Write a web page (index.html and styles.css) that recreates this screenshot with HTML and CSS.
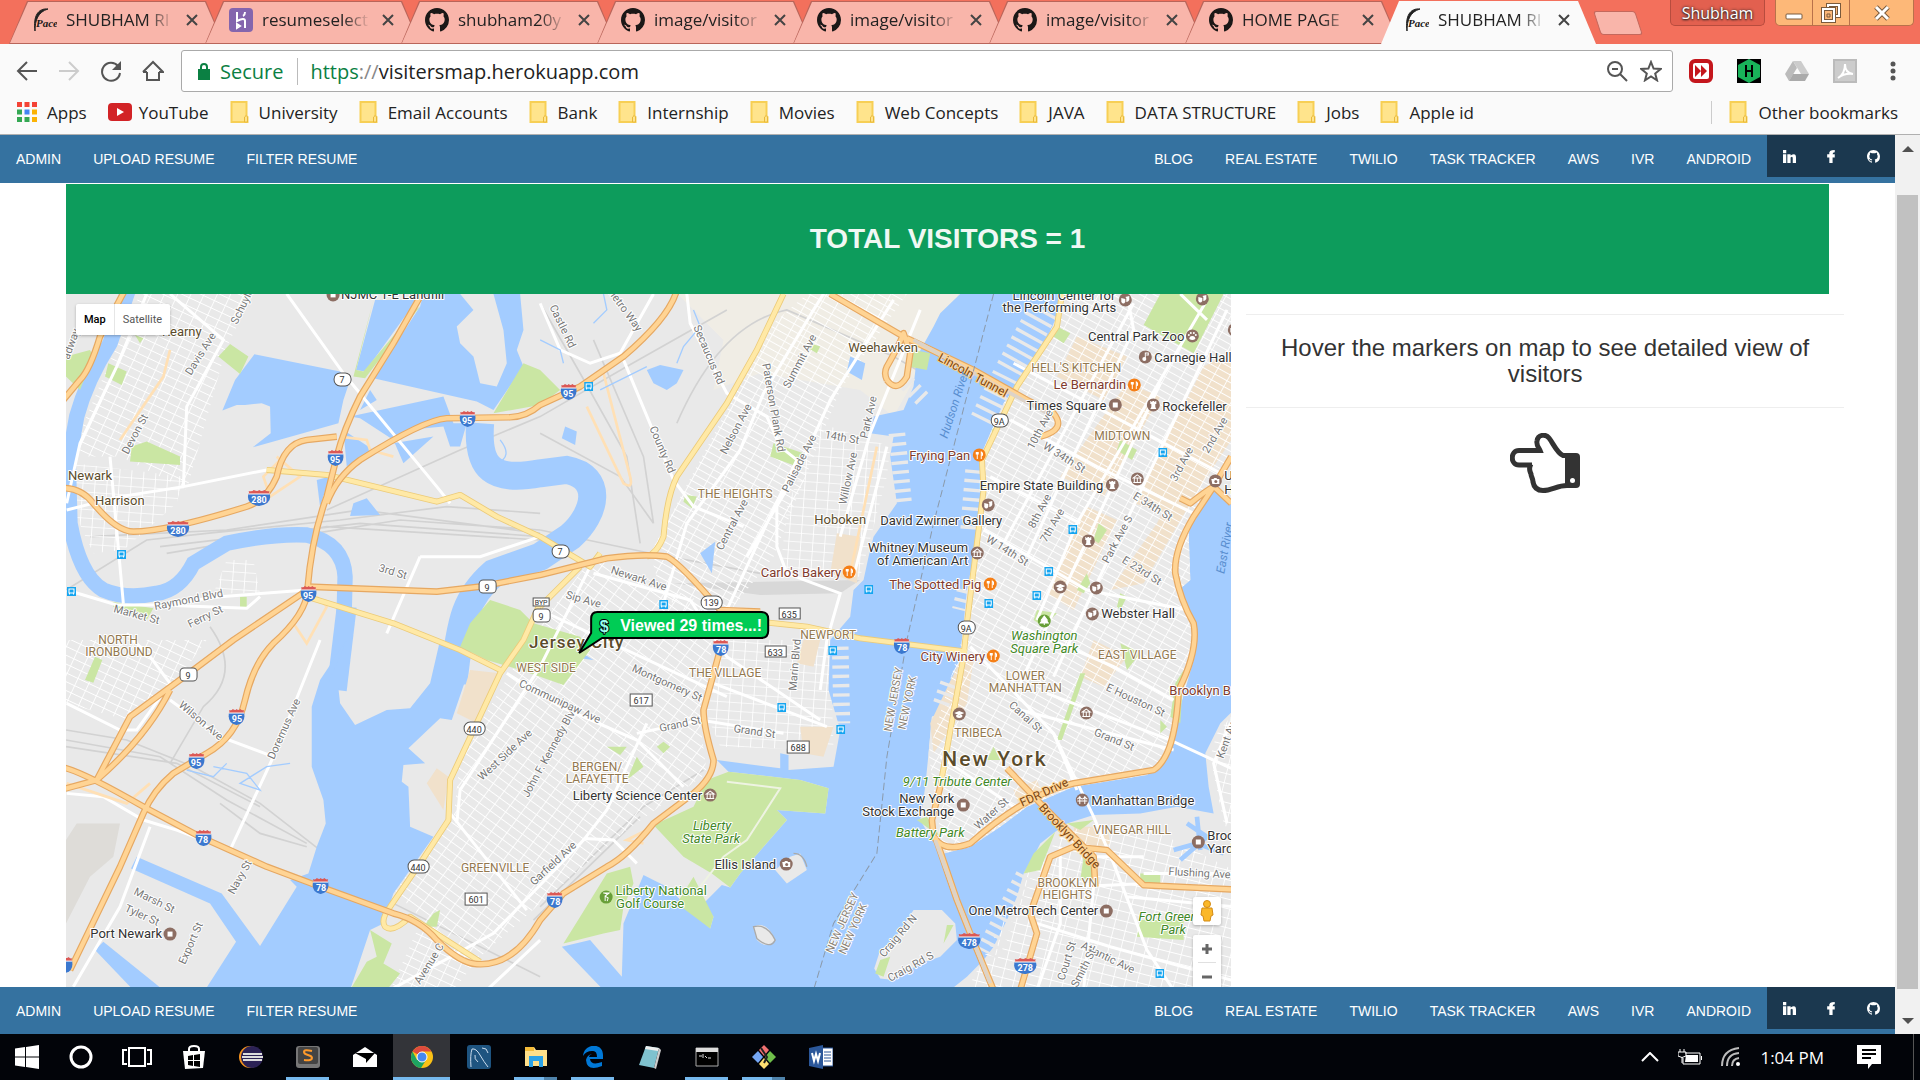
FILE: index.html
```html
<!DOCTYPE html>
<html lang="en">
<head>
<meta charset="utf-8">
<title>SHUBHAM RESUME</title>
<link rel="stylesheet" href="styles.css">
</head>
<body>
<svg class="defs" aria-hidden="true">
  <defs>
    <symbol id="github" viewBox="0 0 16 16"><path d="M8 0C3.58 0 0 3.58 0 8c0 3.54 2.29 6.53 5.47 7.59.4.07.55-.17.55-.38 0-.19-.01-.82-.01-1.49-2.01.37-2.53-.49-2.69-.94-.09-.23-.48-.94-.82-1.13-.28-.15-.68-.52-.01-.53.63-.01 1.08.58 1.23.82.72 1.21 1.87.87 2.33.66.07-.52.28-.87.51-1.07-1.78-.2-3.64-.89-3.64-3.95 0-.87.31-1.59.82-2.15-.08-.2-.36-1.02.08-2.12 0 0 .67-.21 2.2.82.64-.18 1.32-.27 2-.27s1.36.09 2 .27c1.53-1.04 2.2-.82 2.2-.82.44 1.1.16 1.92.08 2.12.51.56.82 1.27.82 2.15 0 3.07-1.87 3.75-3.65 3.95.29.25.54.73.54 1.48 0 1.07-.01 1.93-.01 2.2 0 .21.15.46.55.38A8.01 8.01 0 0 0 16 8c0-4.42-3.58-8-8-8z"/></symbol>
    <symbol id="pace" viewBox="0 0 24 24"><path d="M15 1C5 0 0 8 2 23 2 12 5 4 15 1z" fill="#222" stroke="#222"/><text x="3" y="19" class="pace-text">Pace</text></symbol>
    <symbol id="heroku" viewBox="0 0 24 24"><rect width="24" height="24" rx="4" fill="#8465ad"/><path d="M8 4v9q8-4 8 0v7M8 16v4l3-2zM16 4q0 3-2 4" fill="none" stroke="#fff" stroke-width="2"/></symbol>
    <symbol id="close" viewBox="0 0 12 12"><path d="M1 1l10 10M11 1L1 11" stroke="#444" stroke-width="2"/></symbol>
    <symbol id="folder" viewBox="0 0 18 22"><path d="M1 1h15v14l1 1v5H1z" fill="#ffe48c" stroke="#f7cf55" stroke-width="2"/><path d="M14 21v-5q2-3 3 0v5z" fill="#ffe48c" stroke="#e9b93b"/></symbol>
    <symbol id="linkedin" viewBox="0 0 12 12"><path d="M0 4h3v8H0zM0 0h3v3H0zM4 4h3v1q5-3 5 2v5H9V8q0-3-2-1v5H4z"/></symbol>
    <symbol id="facebook" viewBox="0 0 12 12"><path d="M4 12V7H2V4h2q-1-4 5-4v2Q7 2 7 4h2v3H7v5z"/></symbol>
    <symbol id="shield" viewBox="0 0 18 16" preserveAspectRatio="none"><path d="M1 4h16q2 10-8 12Q-1 14 1 4z" fill="#3b78cf"/><path d="M1 4q1-2 0-3 3 1 4-1 3 2 4 0 2 2 4 0 2 2 4 1-1 1 0 3z" fill="#db5855"/><path d="M1 4h16" stroke="#fff"/></symbol>
    <symbol id="food" viewBox="0 0 14 14"><circle cx="7" cy="7" r="6.500" fill="#f57f17"/><path d="M5 4v7M4 4v2h2V4M9 11V4q2 1 1 4" stroke="#fff" fill="none"/></symbol>
    <symbol id="place" viewBox="0 0 14 14"><circle cx="7" cy="7" r="6.500" fill="#8d6e63"/><path d="M4.500 4.500h5v5h-5z" fill="#fff"/></symbol>
    <symbol id="museum" viewBox="0 0 14 14"><circle cx="7" cy="7" r="6.500" fill="#8d6e63"/><path d="M3 6l4-3 4 3zM4 6v4M7 6v4M10 6v4M3 10.500h8" fill="none" stroke="#fff"/></symbol>
    <symbol id="tower" viewBox="0 0 14 14"><circle cx="7" cy="7" r="6.500" fill="#8d6e63"/><path d="M4 3h1v1h1V3h2v1h1V3h1v3H9v3l1 2H4l1-2V6H4z" fill="#fff"/></symbol>
    <symbol id="mask" viewBox="0 0 14 14"><circle cx="7" cy="7" r="6.500" fill="#8d6e63"/><path d="M3 5l4 1v3q-2 3-4 0zM7 4l4-1v4q-1 2-3 2V5z" fill="#fff"/></symbol>
    <symbol id="note" viewBox="0 0 14 14"><circle cx="7" cy="7" r="6.500" fill="#8d6e63"/><path d="M7 9V3h3v2H8" fill="none" stroke="#fff"/><circle cx="6" cy="9" r="2" fill="#fff"/></symbol>
    <symbol id="paw" viewBox="0 0 14 14"><circle cx="7" cy="7" r="6.500" fill="#8d6e63"/><path d="M4 10q0-3 3-3t3 3q-3 2-6 0z" fill="#fff"/><g fill="#fff"><circle cx="3.500" cy="6" r="1"/><circle cx="5.500" cy="4" r="1"/><circle cx="8.500" cy="4" r="1"/><circle cx="10.500" cy="6" r="1"/></g></symbol>
    <symbol id="bridge" viewBox="0 0 14 14"><circle cx="7" cy="7" r="6.500" fill="#8d6e63"/><path d="M4.500 3v8M9.500 3v8M2 8h10M2 6l2.500-2Q7 8 9.500 4L12 6" fill="none" stroke="#fff"/></symbol>
    <symbol id="school" viewBox="0 0 14 14"><circle cx="7" cy="7" r="6.500" fill="#8d6e63"/><path d="M2 6l5-2 5 2-5 2.500zM4 8v2q3 2 6 0V8" fill="#fff"/></symbol>
    <symbol id="camera" viewBox="0 0 14 14"><circle cx="7" cy="7" r="6.500" fill="#8d6e63"/><path d="M3 5h2l1-1h2l1 1h2v5H4z" fill="#fff"/><circle cx="7.500" cy="7.500" r="1.500" fill="#8d6e63"/></symbol>
    <symbol id="tree" viewBox="0 0 14 14"><circle cx="7" cy="7" r="6.500" fill="#689f38"/><path d="M7 2l3 4H9l2 3H3l2-3H4zM7 8v3" fill="#fff" stroke="#fff"/></symbol>
    <symbol id="golf" viewBox="0 0 14 14"><circle cx="7" cy="7" r="6.500" fill="#689f38"/><path d="M4 3h6L6 6l3 2-1 3M6 6v5M5 3l3 1" fill="none" stroke="#fff"/></symbol>
    <symbol id="transit" viewBox="0 0 9 9"><path d="M0 0h9v9H0z" fill="#15a5f0"/><path d="M2 2h5v4H2zM2.500 6v1.500M6.500 6v1.500" fill="none" stroke="#fff"/></symbol>
  </defs>
</svg>

<header class="browser">
  <div class="tabstrip">
    <nav class="tabs" aria-label="Tabs">
      <div class="tab"><svg class="favicon"><use href="#pace"/></svg><span class="tab-title">SHUBHAM RI</span><button class="tab-close" aria-label="Close tab"><svg><use href="#close"/></svg></button></div>
      <div class="tab"><svg class="favicon"><use href="#heroku"/></svg><span class="tab-title">resumeselect</span><button class="tab-close" aria-label="Close tab"><svg><use href="#close"/></svg></button></div>
      <div class="tab"><svg class="favicon"><use href="#github"/></svg><span class="tab-title">shubham20y</span><button class="tab-close" aria-label="Close tab"><svg><use href="#close"/></svg></button></div>
      <div class="tab"><svg class="favicon"><use href="#github"/></svg><span class="tab-title">image/visitor</span><button class="tab-close" aria-label="Close tab"><svg><use href="#close"/></svg></button></div>
      <div class="tab"><svg class="favicon"><use href="#github"/></svg><span class="tab-title">image/visitor</span><button class="tab-close" aria-label="Close tab"><svg><use href="#close"/></svg></button></div>
      <div class="tab"><svg class="favicon"><use href="#github"/></svg><span class="tab-title">image/visitor</span><button class="tab-close" aria-label="Close tab"><svg><use href="#close"/></svg></button></div>
      <div class="tab"><svg class="favicon"><use href="#github"/></svg><span class="tab-title">HOME PAGE</span><button class="tab-close" aria-label="Close tab"><svg><use href="#close"/></svg></button></div>
      <div class="tab active"><svg class="favicon"><use href="#pace"/></svg><span class="tab-title">SHUBHAM RI</span><button class="tab-close" aria-label="Close tab"><svg><use href="#close"/></svg></button></div>
      <button class="new-tab" aria-label="New tab"></button>
    </nav>
    <div class="window-buttons">
      <button class="profile">Shubham</button>
      <div class="window-controls">
        <button aria-label="Minimize"><svg width="18" height="18" viewBox="0 0 18 18"><rect x="1" y="10" width="16" height="5" rx="1" fill="#fff" stroke="#7a5a3c"/></svg></button>
        <button aria-label="Restore"><svg width="20" height="20" viewBox="0 0 20 20" fill="none"><path d="M7 5V2h11v11h-4" stroke="#7a5a3c" stroke-width="4"/><path d="M7 5V2h11v11h-4" stroke="#fff" stroke-width="2"/><rect x="2" y="6" width="11" height="12" stroke="#7a5a3c" stroke-width="4"/><rect x="2" y="6" width="11" height="12" stroke="#fff" stroke-width="2"/><path d="M6 11h3v3H6z" stroke="#7a5a3c"/></svg></button>
        <button class="wide" aria-label="Close"><svg width="18" height="16" viewBox="0 0 18 16"><path d="M3 2l12 12M15 2L3 14" stroke="#7a5a3c" stroke-width="5"/><path d="M3 2l12 12M15 2L3 14" stroke="#fff" stroke-width="3"/></svg></button>
      </div>
    </div>
  </div>
  <div class="toolbar">
    <button class="tool" aria-label="Back"><svg width="22" height="20" viewBox="0 0 22 20"><path d="M21 10H3M11 1l-9 9 9 9" fill="none" stroke="#555" stroke-width="2"/></svg></button>
    <button class="tool" aria-label="Forward"><svg width="22" height="20" viewBox="0 0 22 20"><path d="M1 10h18M11 1l9 9-9 9" fill="none" stroke="#ccc" stroke-width="2"/></svg></button>
    <button class="tool" aria-label="Reload"><svg width="22" height="22" viewBox="0 0 22 22"><path d="M18 6a9 9 0 1 0 2 7" fill="none" stroke="#555" stroke-width="2"/><path d="M21 1v9h-9z" fill="#555"/></svg></button>
    <button class="tool" aria-label="Home"><svg width="22" height="22" viewBox="0 0 22 22"><path d="M5 12v8h12v-8M1 12L11 2l10 10h-4M5 12H1" fill="none" stroke="#555" stroke-width="2"/></svg></button>
    <div class="omnibox">
      <svg width="12" height="17" viewBox="0 0 12 17"><path d="M0 6h12v11H0z" fill="#0b8043"/><path d="M3 7V4q0-3 3-3t3 3v3" fill="none" stroke="#0b8043" stroke-width="2"/></svg>
      <span class="secure">Secure</span>
      <span class="url" role="textbox" aria-label="Address"><b>https</b><i>://</i>visitersmap.herokuapp.com</span>
      <svg width="22" height="22" viewBox="0 0 22 22" fill="none" stroke="#555" stroke-width="2"><circle cx="9" cy="9" r="7"/><path d="M14 14l7 7M6 9h6"/></svg>
      <svg width="22" height="22" viewBox="0 0 22 22"><path d="M11 2l2.600 6.500 7 .5-5.400 4.500 1.800 6.800-6-3.800-6 3.800 1.800-6.800L1.400 9l7-.5z" fill="none" stroke="#555" stroke-width="2"/></svg>
    </div>
    <div class="extensions">
      <svg width="24" height="24" viewBox="0 0 24 24"><rect x="2" y="2" width="20" height="20" rx="4" fill="#fff" stroke="#c4161c" stroke-width="4"/><path d="M6 6l6 6-6 6zM12 6l6 6-6 6z" fill="#c4161c"/></svg>
      <svg width="24" height="24" viewBox="0 0 24 24"><path d="M0 0h24v24H0z" fill="#000"/><path d="M12 0l11 6v12l-11 6-11-6V6z" fill="#19b35a"/><path d="M9 6v12M15 6v12M9 12h6" stroke="#000" stroke-width="2"/></svg>
      <svg width="24" height="22" viewBox="0 0 24 22"><path d="M8 1h8l8 13h-8z" fill="#ccc"/><path d="M8 1l4 7-8 13-4-7z" fill="#bbb"/><path d="M8 14h16l-4 7H4z" fill="#aaa"/></svg>
      <svg width="24" height="24" viewBox="0 0 24 24"><path d="M1 1h22v22H1z" fill="#ccc" stroke="#bbb" stroke-width="2"/><path d="M5 19q7-4 7-14 0 9 8 10-9-1-15 4" fill="none" stroke="#fff" stroke-width="2"/></svg>
      <svg width="24" height="20" viewBox="0 0 24 20" fill="#555"><circle cx="12" cy="3" r="2.500"/><circle cx="12" cy="10" r="2.500"/><circle cx="12" cy="17" r="2.500"/></svg>
    </div>
  </div>
  <nav class="bookmarks" aria-label="Bookmarks">
    <a href="#"><svg class="apps" viewBox="0 0 20 20"><path d="M0 0h5v5H0zM7.500 0h5v5h-5zM15 0h5v5h-5z" fill="#f44336"/><path d="M0 7.500h5v5H0zM0 15h5v5H0zM7.500 15h5v5h-5z" fill="#34a853"/><path d="M7.500 7.500h5v5h-5z" fill="#4285f4"/><path d="M15 7.500h5v5h-5zM15 15h5v5h-5z" fill="#fbb305"/></svg>Apps</a>
    <a href="#" class="tight"><svg class="youtube" viewBox="0 0 24 18"><rect width="24" height="18" rx="4" fill="#d22326"/><path d="M9 5l7 4-7 4z" fill="#fff"/></svg>YouTube</a>
    <a href="#"><svg class="folder"><use href="#folder"/></svg>University</a>
    <a href="#"><svg class="folder"><use href="#folder"/></svg>Email Accounts</a>
    <a href="#"><svg class="folder"><use href="#folder"/></svg>Bank</a>
    <a href="#"><svg class="folder"><use href="#folder"/></svg>Internship</a>
    <a href="#"><svg class="folder"><use href="#folder"/></svg>Movies</a>
    <a href="#"><svg class="folder"><use href="#folder"/></svg>Web Concepts</a>
    <a href="#"><svg class="folder"><use href="#folder"/></svg>JAVA</a>
    <a href="#"><svg class="folder"><use href="#folder"/></svg>DATA STRUCTURE</a>
    <a href="#"><svg class="folder"><use href="#folder"/></svg>Jobs</a>
    <a href="#"><svg class="folder"><use href="#folder"/></svg>Apple id</a>
    <a href="#" class="other"><svg class="folder"><use href="#folder"/></svg>Other bookmarks</a>
  </nav>
</header>

<div class="viewport">
  <div class="page">
    <nav class="site-nav">
      <a href="#">ADMIN</a><a href="#">UPLOAD RESUME</a><a href="#">FILTER RESUME</a>
      <span class="spacer"></span>
      <a href="#">BLOG</a><a href="#">REAL ESTATE</a><a href="#">TWILIO</a><a href="#">TASK TRACKER</a><a href="#">AWS</a><a href="#">IVR</a><a href="#">ANDROID</a>
      <div class="social"><a href="#" aria-label="LinkedIn"><svg><use href="#linkedin"/></svg></a><a href="#" aria-label="Facebook"><svg><use href="#facebook"/></svg></a><a href="#" aria-label="GitHub"><svg><use href="#github"/></svg></a></div>
    </nav>
    <h1 class="banner">TOTAL VISITORS = 1</h1>
    <main class="content">
      <section class="map" aria-label="Map">
        <svg class="map-canvas" viewBox="66 294 1165 693" preserveAspectRatio="xMidYMid slice">
          <defs>
            <pattern id="g25" width="36" height="24" patternUnits="userSpaceOnUse" patternTransform="rotate(25)"><path d="M0 0H36M0 0V24" stroke="#fff" stroke-width="5"/></pattern>
            <pattern id="g5" width="36" height="26" patternUnits="userSpaceOnUse" patternTransform="rotate(4)"><path d="M0 0H36M0 0V26" stroke="#fff" stroke-width="5"/></pattern>
            <pattern id="g30" width="42" height="20" patternUnits="userSpaceOnUse" patternTransform="rotate(29)"><path d="M0 0H42M0 0V20" stroke="#fff" stroke-width="5"/></pattern>
            <pattern id="g40" width="40" height="24" patternUnits="userSpaceOnUse" patternTransform="rotate(36)"><path d="M0 0H40M0 0V24" stroke="#fff" stroke-width="5"/></pattern>
            <pattern id="g15" width="36" height="28" patternUnits="userSpaceOnUse" patternTransform="rotate(14)"><path d="M0 0H36M0 0V28" stroke="#fff" stroke-width="5"/></pattern>
            <g id="highways">
              <path d="M1085 12L1000 160 900 320Q850 420 830 500L800 620Q755 740 742 900 740 970 640 1060 580 1120 555 1230 530 1340 440 1390L340 1450Q280 1500 250 1570L180 1730 30 2040"/>
              <path d="M1850 0Q1830 80 1690 200L1560 290 1440 345Q1400 380 1350 382L1160 385Q1090 390 900 510 830 560 800 640"/>
              <path d="M195 0L120 140Q90 240 60 270L10 330"/>
              <path d="M0 595Q60 590 100 640 170 725 220 725 320 725 560 650 620 630 650 560 670 460 740 450L830 440"/>
              <path d="M0 1430Q60 1440 250 1550L420 1640 620 1730 780 1790 1000 1870Q1080 1890 1130 1950 1200 2020 1250 2022 1360 2030 1440 1890L1510 1810 1640 1730Q1700 1700 1780 1600L1900 1510Q1960 1460 1960 1410 1930 1310 1930 1260L1985 1060"/>
              <path d="M742 890L1130 905 1260 890 1440 855 1640 805Q1750 790 1820 800 1860 820 1980 960L2100 965"/>
              <path d="M742 900L520 1050 400 1140 210 1280 110 1470 0 1500M330 1200Q260 1340 110 1470"/>
              <path d="M2310 12L2530 140M2480 270Q2510 310 2540 260L2550 190 2530 130Q2520 160 2480 230 2470 250 2480 270M2540 145L2740 240 2900 330 2980 370Q3020 420 2940 440"/>
              <path d="M3513 500L3460 590 3400 680Q3340 780 3345 850 3360 930 3400 1000 3415 1080 3355 1200 3345 1400 3280 1440L3040 1480Q2900 1510 2730 1660 2650 1690 2620 1640L2615 1590 2640 1490M3513 640L3460 590Q3440 600 3390 640L3360 625"/>
              <path d="M2625 1640L2690 1830 2730 1930 2800 2100M2880 2100L2930 1930 2910 1870 2970 1700 3040 1670 3140 1680 3250 1785 3513 1798"/>
              <path d="M2840 1435L2950 1550 3100 1700 3105 1790"/>
            </g>
            <g id="arterials">
              <path d="M3005 12L2990 110 2870 290 2765 510 2770 600 2720 1000 2710 1100 2640 1490"/>
              <path d="M2170 12L2090 180 2000 340 1850 560Q1820 620 1810 740 1790 790 1760 800"/>
              <path d="M1440 940L1390 1050 1320 1150 1170 1470 1165 1590 1080 1720 990 1850Q960 1890 975 1910 1000 1930 1050 1880L1260 2015"/>
              <path d="M620 540L800 555 1130 635 1200 615 1310 680 1440 740 1590 830 1620 790M740 920L1000 1000 1200 1080 1330 1145M1440 950L1560 830M2000 985L2240 1010 2400 1045 2720 1085"/>
            </g>
          </defs>
          <path d="M66 294h1165v693H66z" fill="#e9e9e9"/>
          <g transform="translate(60 290) scale(.33333)">
            <path d="M1840 0H2700L2600 200 2500 380 2400 300 2100 250 1960 300 1990 150z" fill="#f0ede5"/>
            <path d="M18 1650L50 1600 180 1600 160 1700 90 1760 18 1900z" fill="#dedcd8"/>
            <g class="rail">
              <path d="M18 900L260 750 440 730 840 690 1160 650 1440 670M90 740L500 720 900 660 1440 730M300 770L900 700 1440 740M320 790L800 710 1440 750M700 740L1020 690 1440 720M800 660L1200 480 1440 380 1700 230 2000 60"/>
              <path d="M18 1320L200 1350 400 1430 600 1540 780 1680 1000 1840 1440 2060M18 1350L300 1400 500 1530 740 1660M18 1370L350 1420 600 1550M480 1540L600 1630 740 1670M450 1010Q550 1150 430 1250L330 1420"/>
              <path d="M1440 40L1560 250 1700 500 1740 760M1600 150L1750 500 1780 700M1440 430L1680 560 1780 700M1440 720L1770 790 2100 850M1850 400Q1980 100 2180 60L2500 200 2850 400"/>
              <path d="M1440 1850L1750 1550 1930 1440M1420 1890L1740 1580M3500 720L2820 420M2750 350L3100 550"/>
            </g>
            <path d="M1840 880L2400 870 2340 910 2100 915z" fill="#d8d8d8"/>
            <g fill="url(#g25)"><path d="M240 12H580L500 170 380 600 180 500H30L130 260z"/><path d="M18 1050H440L330 1200 200 1290 18 1240z"/></g>
            <path d="M40 520L370 560 350 640 190 780 100 790 30 640zM500 810h80l20 100H460zM2280 400L2490 470 2480 560 2400 860 2160 850 2180 650zM1980 1050H2310L2320 1380 1980 1370 1930 1250z" fill="url(#g5)"/>
            <path d="M2240 12H2540L2340 300 2140 800 1940 1050 1800 900 1770 790 2000 360 2140 100z" fill="url(#g30)"/>
            <path d="M1600 800L1960 950 1950 1150 1920 1300 1940 1450 1700 1620 1440 1840 1250 2010 1100 1900 1000 1800 1180 1590 1200 1400 1440 1000z" fill="url(#g40)"/>
            <path d="M990 2100L1080 1900 1260 2000 1180 2100z" fill="url(#g25)"/>
            <g fill="none" stroke="#a3ccff" stroke-width="46">
              <path d="M205 0L150 160Q80 270 50 380L25 520 30 700Q60 860 130 900 200 930 290 910 360 900 400 820L500 760Q640 730 740 735 850 760 855 860L850 1060"/>
              <path d="M860 950L830 1200" stroke-width="60"/>
              <path d="M1260 400C1250 540 1300 575 1440 550L1520 540C1630 560 1610 670 1530 740L1440 800 1300 850C1220 920 1200 980 1180 1180" stroke-width="84"/>
            </g>
            <g fill="#a3ccff">
              <path d="M583 193L840 245 870 270 850 330 835 400 578 472 632 430 630 350 605 340 555 345 530 345 487 362 525 270z"/>
              <path d="M945 30L1070 30 915 245 888 240zM1090 12H1200L1240 60 1190 110 1200 160 1240 200 1260 280 1310 290 1340 220 1330 120 1300 12H1380L1390 120 1370 180 1390 230 1300 360 1250 335 940 265 1080 50zM930 300L950 330 900 360zM850 420L940 480 860 530zM870 380L1150 320 1180 400 1220 400 1200 470 1170 470 1150 410 1040 420 1000 460 1120 440 1030 520 1000 450 900 385zM770 570L810 560 780 650zM880 640L920 625 960 675 870 678z"/>
              <path d="M1180 1080L1240 1040 1216 1170 1175 1290 1140 1285 1045 1375 1095 1420 1030 1425 1025 1475 1045 1490 1050 1610 1120 1640 1000 1810 970 1900 930 1920 870 2100H435L528 1955 450 1840 213 1735 230 1700 485 1810 600 1968 710 1790 690 1770 745 1750 770 1670 797 1600 790 1530 755 1430 755 1250 780 1170 860 1050 805 1180 835 1195 840 1240 885 1305 980 1260 1050 1255 1110 1180 1140 1050z"/>
              <path d="M130 1955L310 2100H220L105 1980z"/>
              <path d="M1760 240L1800 225 1870 240 1850 280 1820 300 1780 280zM1515 410L1550 425 1545 465 1505 445zM2370 200L2415 220 2405 270 2360 245zM1920 790L1965 755 1955 850zM1440 1010L1600 1110 1300 1070z" />
              <path d="M2700 12L2640 70 2620 110 2570 200 2560 290 2530 360 2440 380 2430 430 2500 440 2490 500 2500 570 2510 640 2440 740 2425 800 2410 870 2380 900 2370 980 2310 1050 2305 1200 2340 1320 2320 1430 2185 1440 2185 1395 2160 1390 2160 1435 1970 1410 2005 1445 2220 1470 2305 1495 2295 1570 2150 1560 2180 1590 2040 1750 2010 1792 1985 1785 1930 1840 1960 1880 1950 1915 1820 1790 1750 1755 1690 1900 1685 2060 1590 1950 1505 1970 1630 2100H2670L2720 2060 2770 2010 2800 1970 2840 1890 2870 1820 2890 1750 2920 1700 2940 1660 2985 1625 3020 1600 3100 1575 3240 1570 3350 1550 3460 1570 3445 1490 3435 1390 3480 1300 3520 1260V640L3460 590 3400 670 3385 730 3390 870 3355 900 3400 1000 3410 1060 3400 1110 3360 1250 3320 1400 3260 1455 3040 1490 2900 1550 2820 1610 2730 1670 2650 1690 2615 1650 2580 1590 2595 1490 2605 1390 2615 1280 2640 1270 2685 1210 2705 1050 2720 900 2740 800 2750 720 2770 600 2760 500 2790 430 2830 340 2870 290 2940 190 3000 100 3020 12z"/>
            </g>
            <path d="M3020 12H3520V480L3400 670 3385 730 3390 870 3355 900 3400 1000 3410 1060 3320 1400 3260 1455 3040 1490 2900 1550 2820 1610 2730 1670 2650 1690 2615 1650 2605 1390 2615 1280 2640 1270 2685 1210 2705 1050 2770 600 2760 500 2830 340 2940 190z" fill="#e9e9e9"/>
            <g fill="#f1e1cb">
              <path d="M3050 140L3200 200 3130 330 2990 260zM3200 280L3300 320 3130 620 3000 560zM3430 230L3520 180V440L3360 680 3220 640zM3080 650L3170 690 3040 960 2960 910zM3150 900L3290 700 3340 600 3390 640 3250 880zM2700 1110L2740 1110 2720 1240 2620 1390 2610 1300zM2860 1500L2930 1470 2950 1520 2880 1560zM3040 1610L3140 1610 3150 1660 3050 1690zM3100 1050L3200 1100 3130 1190 3060 1160z"/>
              <path d="M2330 730L2400 740 2390 880 2310 850zM1230 1140L1320 1150 1250 1300 1190 1270zM1130 1435L1165 1460 1150 1560 1100 1480zM2230 1050H2280L2260 1130 2210 1120zM2220 1310H2320L2290 1400 2230 1390z"/>
            </g>
            <path d="M3020 12H3520V480L3400 670 3385 730 3390 870 3355 900 3400 1000 3410 1060 3320 1400 3260 1455 3040 1490 2900 1550 2820 1610 2730 1670 2650 1690 2605 1390 2705 1050 2770 600 2760 500 2830 340 2940 190z" fill="url(#g30)"/>
            <path d="M2900 1750L3020 1620 3240 1600 3520 1740V2100H2720z" fill="url(#g15)"/>
            <path d="M3520 1270L3470 1330 3450 1400 3490 1600 3520 1640z" fill="url(#g15)"/>
            <g class="piers">
              <path d="M2950 60L2850 240M2840 260L2770 400" stroke-width="90"/>
              <path d="M2740 540L2725 720M2715 900L2700 960M2665 1180L2640 1250" stroke-width="50"/>
              <path d="M2510 430L2530 640M2540 280L2590 330M2340 1070L2345 1300" stroke-width="50"/>
              <path d="M2900 1760L2780 1990" stroke-width="70"/>
            </g>
            <path d="M2560 1860L2645 1860 2685 1900 2690 1950 2640 2000 2580 2020 2500 2070 2460 2065 2442 2035 2460 1980 2500 1950zM2080 1910Q2120 1890 2145 1950 2120 1980 2090 1950zM2145 1740L2180 1780 2240 1740 2220 1690 2190 1700z" fill="#e9e9e9"/>
            <path d="M2080 1910Q2120 1900 2145 1950 2130 1980 2090 1945zM2200 1690q30 0 40 40" fill="none" stroke="#aaa" stroke-width="4"/>
            <g fill="#cae6a3">
              <path d="M18 200L90 180 100 200 60 300 18 260zM145 220L200 245 185 285 135 260zM510 162L565 200 540 252 475 200zM215 470L260 455 360 500 360 525 210 515zM940 30L880 260 915 265 1080 50 1065 60 910 245 888 240zM1390 220L1440 240 1500 300 1440 345 1300 370zM540 920h20v35h-20zM155 935L280 955 260 990 160 950zM105 1100L127 1110 100 1178 75 1170zM225 135l25 10-10 15z"/>
              <path d="M1290 930L1380 960 1420 1000 1560 1040 1590 1080 1510 1185 1440 1160 1380 1140 1280 1110 1200 1070 1230 1000zM1700 1370L1640 1370 1680 1395zM1730 1400L1750 1430 1700 1470zM1810 1355l20 15-20 20-20-20z"/>
              <path d="M2005 1445L2220 1470 2305 1495 2295 1570 2150 1560 2180 1590 2040 1750 2010 1792 1955 1750 1870 1700 1780 1605 1900 1550 1940 1470zM1640 1750L1710 1730 1720 1780 1690 1850 1680 1920 1630 1930 1510 1960 1560 1880zM1900 1760L1960 1880 1950 1915 1850 1840z"/>
              <path d="M3300 12L3250 105 3400 190 3490 12zM930 1920L995 1960 970 2020 1020 2050 980 2100H870L920 2015 950 2000zM1120 1870L1140 1860 1130 1910 1090 1910zM2140 460L2230 490 2210 530 2130 500zM2250 160l30 10-10 20-25-15zM1875 615l35 5-15 35-25-20zM2560 180L2610 190 2600 240 2545 230z"/>
              <path d="M3180 450L3230 480 3215 510 3170 480zM3115 700L3140 720 3115 760 3100 750zM3080 850L3090 880 3070 910 3050 900zM2990 110L3030 130 3010 160 2980 140zM2930 960L2990 970 2950 1010 2920 990zM3180 910l20 10-20 40-10-10zM2795 420l15-15-15 40zM3060 1150h15l-70 200h-15zM2820 1410L2780 1410 2800 1370zM2640 1640L2570 1590 2600 1580zM2985 1625L2940 1740 2890 1750 2920 1690zM3070 1700H3110L3100 1770H3060zM3240 1750H3300V1780H3240zM3020 1600L3100 1590 3060 1620zM3240 1890H3370V1950L3230 1940zM2680 1905H2660L2650 1960zM2460 2010L2490 2000 2470 2060 2445 2050zM3345 1180L3370 1140 3360 1300 3330 1280zM3300 1290L3320 1310 3300 1330zM3180 1060L3240 1090 3200 1140z"/>
            </g>
            <path d="M2000 1475L2160 1495 2060 1650 1990 1700 1920 1790" fill="none" stroke="#eef3e2" stroke-width="6"/>
            <g class="streets">
              <path d="M680 12L850 250 1130 590 1170 640M260 12L170 230 60 460 20 640M330 12L490 150 380 350 370 590 180 620 20 660M150 500L190 940M370 590L620 540M20 900L170 945 300 945 480 920 740 900M300 945L560 955 600 920M20 1240L180 1320 230 1320 330 1180 270 1100 200 1030M330 1230L480 1340 640 1400 780 1050M640 1400L510 1680 350 1620 250 1590 130 1520 20 1510M270 1610L180 1850 40 2090M1080 800L1260 800 1440 740M1080 800L980 1030"/>
              <path d="M1440 40L1500 180 1590 220 1680 190 1780 12M1690 210L1840 570 1900 650 2050 710M1880 12L1890 100 2000 310 2120 380 2160 470 2210 510 2120 700 2000 960M2290 12L2260 60 2110 310 2040 480 1880 700 1810 940M2500 30L2310 330 2220 530 2060 800M2580 60L2430 430 2340 740M2480 470L2380 860M2150 650L2150 770 2180 850 2340 910 2300 1050 2280 1200M1600 850L1890 930 2000 1100 2280 1290"/>
              <path d="M1590 830L1440 1130 1200 1500 1190 1600M1340 1150L1500 1250 1730 1350 1870 1490M1760 1300L1640 1560 1570 1650 1300 1930 990 2100M1730 1330L1920 1290 2170 1330M1570 1645L1660 1650 1730 1720M1170 1570L1400 1860M1440 1950L1280 2100M1960 1180L2300 1310M1440 960L2000 1220M3200 12L3220 120 3010 560 2900 800M3360 12L3440 90M3500 60L3100 900 2980 1160M3440 30L3050 700 2930 990M2790 560L3060 700M2850 390L3110 530 3400 670M2860 220L3500 560M2770 720L3080 900 3380 960M2730 1070L2980 1330 3050 1500M2880 1010L3160 1130 3340 1230M3220 40L2830 760M3300 280L2880 1180"/>
              <path d="M2980 1330L3100 1580 3160 1720 3260 1980 3340 2100M3080 1700H3250M3040 1790L3260 1780M3250 1750L3520 1750M2930 1900L3150 1970 3513 2070M3000 1670L3000 1900 2930 2100M3100 1790L3070 2100M3200 1820L3520 1850M2640 1400L2860 1550M2880 1260L3340 1380M3510 1300L3460 1420 3500 1600"/>
              <path d="M2960 1210L3330 1350 3513 1435" stroke-width="14"/>
            </g>
            <path d="M3380 1600L3440 1640 3360 1710M3340 1680L3410 1660 3490 1690M3410 1580L3420 1680" fill="none" stroke="#a3ccff" stroke-width="14"/>
            <g fill="none" stroke="#ffe0b5" stroke-width="8"><path d="M1580 350L1690 580Q1720 600 1710 560L1630 250M840 440L920 450 930 480 1000 500M650 500L720 560 630 620 610 560 670 500M700 1000L740 1060 800 950 770 920M330 180L310 260 180 450M2450 470L2370 850M1750 1660L1700 1650 1760 1620M20 1480L200 1540 270 1480"/></g>
            <use href="#arterials" class="case yellow"/><use href="#arterials" class="fill yellow"/>
            <use href="#highways" class="case"/><use href="#highways" class="fill"/>
            <path d="M2560 150L2960 370M2625 1650L2690 1830 2790 2080" class="tunnel"/>
            <path d="M2800 12L2620 700 2540 1050 2480 1400 2450 1690 2320 1900 2260 2100" class="border"/>
            <path d="M1600 100L1640 60 1630 12M1440 150L1500 180 1510 220M1620 300L1760 230M1850 220L1870 170 1920 110 1900 60M460 1430L560 1450 600 1500 540 1480 620 1430 690 1420M380 1440L460 1460 500 1420M1320 450Q1360 500 1310 520" fill="none" stroke="#a3ccff" stroke-width="4"/>
          </g>

          <g class="street" transform="translate(60 290)">
            <text transform="translate(177 35) rotate(-64)">Schuyler</text><text transform="translate(131 86) rotate(-58)">Davis Ave</text><text transform="translate(68 165) rotate(-62)">Devon St</text><text transform="translate(9 70) rotate(-70)">adway</text>
            <text transform="translate(318 281) rotate(17)">3rd St</text><text transform="translate(95 320) rotate(-11)">Raymond Blvd</text><text transform="translate(53 322) rotate(15)">Market St</text><text transform="translate(130 338) rotate(-26)">Ferry St</text>
            <text transform="translate(118 416) rotate(40)">Wilson Ave</text><text transform="translate(214 470) rotate(-66)">Doremus Ave</text><text transform="translate(174 605) rotate(-61)">Navy St</text><text transform="translate(73 604) rotate(26)">Marsh St</text><text transform="translate(64 621) rotate(24)">Tyler St</text><text transform="translate(125 675) rotate(-66)">Export St</text><text transform="translate(422 491) rotate(-43)">West Side Ave</text><text transform="translate(360 695) rotate(-58)">Avenue C</text><text transform="translate(468 508) rotate(-61)">John F. Kennedy Blvd</text><text transform="translate(458 396) rotate(25)">Communipaw Ave</text>
          </g>
          <g class="street" transform="translate(540 290)">
            <text transform="translate(9 17) rotate(64)">Castle Rd</text><text transform="translate(66 0) rotate(54)">Metro Way</text><text transform="translate(153 37) rotate(67)">Secaucus Rd</text><text transform="translate(109 138) rotate(67)">County Rd</text><text transform="translate(186 165) rotate(-62)">Nelson Ave</text><text transform="translate(222 74) rotate(80)">Paterson Plank Rd</text><text transform="translate(249 99) rotate(-62)">Summit Ave</text><text transform="translate(248 203) rotate(-63)">Palisade Ave</text><text transform="translate(182 261) rotate(-62)">Central Ave</text><text transform="translate(306 215) rotate(-78)">Willow Ave</text><text transform="translate(327 149) rotate(-77)">Park Ave</text><text transform="translate(284 148) rotate(10)">14th St</text><text transform="translate(70 283) rotate(18)">Newark Ave</text><text transform="translate(25 308) rotate(16)">Sip Ave</text><text transform="translate(91 381) rotate(24)">Montgomery St</text><text transform="translate(120 442) rotate(-12)">Grand St</text><text transform="translate(193 442) rotate(8)">Grand St</text><text transform="translate(256 401) rotate(-85)">Marin Blvd</text><text transform="translate(-6 596) rotate(-43)">Garfield Ave</text><text transform="translate(344 668) rotate(-50)">Craig Rd N</text><text transform="translate(350 692) rotate(-29)">Craig Rd S</text>
          </g>
          <g class="street" transform="translate(860 290)">
            <text transform="translate(173 160) rotate(-62)">10th Ave</text><text transform="translate(182 158) rotate(32)">W 34th St</text><text transform="translate(174 239) rotate(-62)">8th Ave</text><text transform="translate(186 253) rotate(-60)">7th Ave</text><text transform="translate(125 251) rotate(32)">W 14th St</text><text transform="translate(272 208) rotate(32)">E 34th St</text><text transform="translate(261 272) rotate(32)">E 23rd St</text><text transform="translate(248 274) rotate(-62)">Park Ave S</text><text transform="translate(316 192) rotate(-62)">3rd Ave</text><text transform="translate(348 164) rotate(-60)">2nd Ave</text><text transform="translate(245 400) rotate(25)">E Houston St</text><text transform="translate(148 416) rotate(42)">Canal St</text><text transform="translate(233 445) rotate(22)">Grand St</text><text transform="translate(118 540) rotate(-42)">Water St</text><text transform="translate(363 469) rotate(-70)">Kent Ave</text><text transform="translate(308 585) rotate(3)">Flushing Ave</text><text transform="translate(220 658) rotate(26)">Atlantic Ave</text><text transform="translate(204 691) rotate(-73)">Court St</text><text transform="translate(217 698) rotate(-63)">Smith St</text>
            <g class="highway-name"><text transform="translate(77 70) rotate(29)">Lincoln Tunnel</text><text transform="translate(162 517) rotate(-25)">FDR Drive</text><text transform="translate(178 518) rotate(47)">Brooklyn Bridge</text></g>
            <g class="water-name"><text transform="translate(87 149) rotate(-72)">Hudson River</text><text transform="translate(364 284) rotate(-80)">East River</text></g>
            <g class="state"><text transform="translate(31 442) rotate(-80)">NEW JERSEY</text><text transform="translate(45 440) rotate(-78)">NEW YORK</text></g>
          </g>
          <g class="state"><text transform="translate(832 954) rotate(-66)">NEW JERSEY</text><text transform="translate(845 955) rotate(-66)">NEW YORK</text></g>

          <g class="town">
            <text x="162" y="336">Kearny</text><text x="68" y="480">Newark</text><text x="95" y="505">Harrison</text><text x="848" y="352">Weehawken</text><text x="814" y="524">Hoboken</text>
            <text x="529" y="648" class="city">Jersey City</text><text x="942" y="766" class="metro">New York</text>
          </g>
          <g class="district">
            <text x="118" y="644">NORTH</text><text x="119" y="656">IRONBOUND</text><text x="735" y="498">THE HEIGHTS</text><text x="828" y="639">NEWPORT</text><text x="725" y="677">THE VILLAGE</text><text x="546" y="672">WEST SIDE</text><text x="597" y="771">BERGEN/</text><text x="597" y="783">LAFAYETTE</text><text x="495" y="872">GREENVILLE</text><text x="1076" y="372">HELL'S KITCHEN</text><text x="1122" y="440">MIDTOWN</text><text x="1137" y="659">EAST VILLAGE</text><text x="1025" y="680">LOWER</text><text x="1025" y="692">MANHATTAN</text><text x="978" y="737">TRIBECA</text><text x="1132" y="834">VINEGAR HILL</text><text x="1067" y="887">BROOKLYN</text><text x="1067" y="899">HEIGHTS</text>
          </g>
          <g class="park">
            <text x="712" y="830">Liberty</text><text x="711" y="843">State Park</text><text x="957" y="786">9/11 Tribute Center</text><text x="930" y="837">Battery Park</text><text x="1044" y="640">Washington</text><text x="1044" y="653">Square Park</text><text x="1171" y="921">Fort Greene</text><text x="1173" y="934">Park</text>
            <g class="upright"><text x="661" y="895">Liberty National</text><text x="650" y="908">Golf Course</text></g>
          </g>
          <g class="poi">
            <text x="341" y="299" class="s">NJMC 1-E Landfill</text><text x="1115" y="300">Lincoln Center for</text><text x="1116" y="312">the Performing Arts</text><text x="1184" y="341">Central Park Zoo</text><text x="1154" y="362" class="s">Carnegie Hall</text><text x="1106" y="410">Times Square</text><text x="1162" y="411" class="s">Rockefeller</text><text x="1103" y="490">Empire State Building</text><text x="1002" y="525">David Zwirner Gallery</text><text x="968" y="552">Whitney Museum</text><text x="968" y="565">of American Art</text><text x="1101" y="618" class="s">Webster Hall</text><text x="702" y="800">Liberty Science Center</text><text x="776" y="869">Ellis Island</text><text x="954" y="803">New York</text><text x="954" y="816">Stock Exchange</text><text x="1091" y="805" class="s">Manhattan Bridge</text><text x="1098" y="915">One MetroTech Center</text><text x="162" y="938">Port Newark</text><text x="1207" y="840" class="s">Broo</text><text x="1207" y="853" class="s">Yard</text><text x="1224" y="480" class="s">U</text><text x="1224" y="494" class="s">H</text>
            <g class="eat"><text x="841" y="577">Carlo's Bakery</text><text x="1126" y="389">Le Bernardin</text><text x="970" y="460">Frying Pan</text><text x="981" y="589">The Spotted Pig</text><text x="985" y="661">City Winery</text><text x="1169" y="695" class="s">Brooklyn B</text></g>
          </g>
          <use href="#place" x="326" y="288" width="14" height="14"/><use href="#mask" x="1118" y="293" width="14" height="14"/><use href="#mask" x="1195" y="292" width="14" height="14"/><use href="#paw" x="1185" y="329" width="14" height="14"/><use href="#note" x="1138" y="350" width="14" height="14"/><use href="#mask" x="1227" y="323" width="14" height="14"/><use href="#place" x="1108" y="398" width="14" height="14"/><use href="#tower" x="1146" y="398" width="14" height="14"/><use href="#museum" x="1130" y="472" width="14" height="14"/><use href="#tower" x="1105" y="478" width="14" height="14"/><use href="#camera" x="1208" y="474" width="14" height="14"/><use href="#mask" x="981" y="498" width="14" height="14"/><use href="#tower" x="1081" y="534" width="14" height="14"/><use href="#museum" x="970" y="546" width="14" height="14"/><use href="#school" x="1053" y="580" width="14" height="14"/><use href="#mask" x="1089" y="581" width="14" height="14"/><use href="#mask" x="1085" y="607" width="14" height="14"/><use href="#tree" x="1037" y="614" width="14" height="14"/><use href="#school" x="952" y="707" width="14" height="14"/><use href="#museum" x="1079" y="706" width="14" height="14"/><use href="#place" x="956" y="798" width="14" height="14"/><use href="#bridge" x="1075" y="793" width="14" height="14"/><use href="#place" x="1191" y="835" width="14" height="14"/><use href="#place" x="1099" y="904" width="14" height="14"/><use href="#museum" x="703" y="788" width="14" height="14"/><use href="#camera" x="779" y="857" width="14" height="14"/><use href="#golf" x="599" y="890" width="14" height="14"/><use href="#place" x="163" y="927" width="14" height="14"/>
          <use href="#food" x="1127" y="378" width="14" height="14"/><use href="#food" x="972" y="448" width="14" height="14"/><use href="#food" x="983" y="577" width="14" height="14"/><use href="#food" x="842" y="565" width="14" height="14"/><use href="#food" x="986" y="649" width="14" height="14"/>
          <use href="#transit" x="117" y="550" width="9" height="9"/><use href="#transit" x="67" y="587" width="9" height="9"/><use href="#transit" x="584" y="382" width="9" height="9"/><use href="#transit" x="659" y="600" width="9" height="9"/><use href="#transit" x="864" y="585" width="9" height="9"/><use href="#transit" x="1158" y="448" width="9" height="9"/><use href="#transit" x="1068" y="525" width="9" height="9"/><use href="#transit" x="1044" y="567" width="9" height="9"/><use href="#transit" x="1032" y="591" width="9" height="9"/><use href="#transit" x="984" y="599" width="9" height="9"/><use href="#transit" x="828" y="646" width="9" height="9"/><use href="#transit" x="777" y="703" width="9" height="9"/><use href="#transit" x="836" y="725" width="9" height="9"/><use href="#transit" x="1155" y="969" width="9" height="9"/>
          <g class="shields">
            <use href="#shield" x="327" y="450" width="17" height="16"/><text x="335" y="463">95</text><use href="#shield" x="459" y="411" width="17" height="16"/><text x="467" y="424">95</text><use href="#shield" x="560" y="384" width="17" height="16"/><text x="568" y="397">95</text><use href="#shield" x="300" y="586" width="17" height="16"/><text x="308" y="599">95</text><use href="#shield" x="228" y="709" width="17" height="16"/><text x="237" y="722">95</text><use href="#shield" x="188" y="753" width="17" height="16"/><text x="196" y="766">95</text><use href="#shield" x="195" y="830" width="17" height="16"/><text x="203" y="843">78</text><use href="#shield" x="312" y="878" width="17" height="16"/><text x="321" y="891">78</text><use href="#shield" x="546" y="892" width="17" height="16"/><text x="555" y="905">78</text><use href="#shield" x="712" y="640" width="17" height="16"/><text x="721" y="653">78</text><use href="#shield" x="893" y="638" width="17" height="16"/><text x="902" y="651">78</text>
            <use href="#shield" x="247" y="490" width="24" height="16"/><text x="259" y="503">280</text><use href="#shield" x="166" y="521" width="24" height="16"/><text x="178" y="534">280</text><use href="#shield" x="957" y="933" width="24" height="16"/><text x="969" y="946">478</text><use href="#shield" x="1013" y="958" width="24" height="16"/><text x="1025" y="971">278</text><use href="#shield" x="57" y="957" width="16" height="16"/>
          </g>
          <g class="plates">
            <rect x="334" y="373" width="17" height="13" rx="6"/><text x="342" y="383">7</text><rect x="552" y="545" width="17" height="13" rx="6"/><text x="560" y="555">7</text><rect x="479" y="580" width="17" height="13" rx="4"/><text x="487" y="591">9</text><rect x="180" y="668" width="17" height="13" rx="4"/><text x="188" y="679">9</text><rect x="533" y="609" width="17" height="13" rx="4"/><text x="541" y="620">9</text><rect x="533" y="598" width="16" height="8"/><text x="541" y="605" class="tiny">BYP</text><rect x="701" y="596" width="21" height="13" rx="6"/><text x="711" y="606">139</text><rect x="779" y="608" width="21" height="11"/><text x="789" y="618">635</text><rect x="765" y="646" width="21" height="11"/><text x="775" y="656">633</text><rect x="630" y="694" width="22" height="12"/><text x="641" y="704">617</text><rect x="787" y="741" width="22" height="12"/><text x="798" y="751">688</text><rect x="465" y="893" width="22" height="12"/><text x="476" y="903">601</text><rect x="464" y="722" width="21" height="13" rx="6"/><text x="474" y="733">440</text><rect x="408" y="860" width="21" height="13" rx="6"/><text x="418" y="871">440</text><rect x="991" y="414" width="17" height="13" rx="6"/><text x="999" y="425">9A</text><rect x="958" y="621" width="17" height="13" rx="6"/><text x="966" y="632">9A</text>
          </g>
          <g class="callout">
            <path d="M597 612H761Q768 612 768 619V631Q768 638 761 638H602L579 653 591 633V619Q591 612 597 612z" fill="#0c5" stroke="#000" stroke-width="2"/>
            <text x="604" y="632" class="dollar">$</text><text x="620" y="631">Viewed 29 times...!</text>
          </g>
        </svg>
        <div class="map-type"><button class="selected">Map</button><button>Satellite</button></div>
        <div class="map-tools">
          <button class="pegman" aria-label="Street View"><svg width="14" height="22" viewBox="0 0 14 22"><circle cx="7" cy="4" r="3.500" fill="#fbb829" stroke="#d38b15"/><path d="M2 8h10l1 7-2 1-1 5H4l-1-5-2-1z" fill="#fbb829" stroke="#d38b15"/></svg></button>
          <div class="zoom"><button aria-label="Zoom in"><svg width="12" height="12" viewBox="0 0 12 12"><path d="M1 6h10M6 1v10" stroke="#666" stroke-width="3"/></svg></button><button aria-label="Zoom out"><svg width="12" height="12" viewBox="0 0 12 12"><path d="M1 6h10" stroke="#666" stroke-width="3"/></svg></button></div>
        </div>
      </section>
      <aside class="details">
        <hr>
        <h2>Hover the markers on map to see detailed view of visitors</h2>
        <hr>
        <svg class="hand" viewBox="0 0 70 60"><path d="M57 22.500H53C47 20 43 10 39 5 36 1 28 1 27 8 26 12 29 15 30 17.500H9C0 17.500 0 32 9 32H22M21 31C18 36 20 38 21 41 21 44 23 45 23 49 24 55 27 57.500 33 57.500 42 57.500 47 52.500 57 52.500" fill="none" stroke="#333" stroke-width="5"/><path d="M55 20h11q4 0 4 4v27q0 4-4 4H55z" fill="#333"/><circle cx="62.500" cy="47.500" r="2.500" fill="#fff"/></svg>
      </aside>
    </main>
    <nav class="site-nav bottom">
      <a href="#">ADMIN</a><a href="#">UPLOAD RESUME</a><a href="#">FILTER RESUME</a>
      <span class="spacer"></span>
      <a href="#">BLOG</a><a href="#">REAL ESTATE</a><a href="#">TWILIO</a><a href="#">TASK TRACKER</a><a href="#">AWS</a><a href="#">IVR</a><a href="#">ANDROID</a>
      <div class="social"><a href="#" aria-label="LinkedIn"><svg><use href="#linkedin"/></svg></a><a href="#" aria-label="Facebook"><svg><use href="#facebook"/></svg></a><a href="#" aria-label="GitHub"><svg><use href="#github"/></svg></a></div>
    </nav>
  </div>
  <div class="scrollbar"><svg width="12" height="6" viewBox="0 0 12 6"><path d="M0 6l6-6 6 6z" fill="#505050"/></svg><span class="thumb"></span><svg width="12" height="6" viewBox="0 0 12 6"><path d="M0 0l6 6 6-6z" fill="#505050"/></svg></div>
</div>

<footer class="taskbar">
  <button class="system" aria-label="Start"><svg width="24" height="24" viewBox="0 0 24 24" fill="#fff"><path d="M0 3.500L10 2v9.500H0zM11 2l13-2v11.500H11zM0 12.500h10V22L0 20.500zM11 12.500h13V24l-13-2z"/></svg></button>
  <button class="system" aria-label="Cortana"><svg width="24" height="24" viewBox="0 0 24 24"><circle cx="12" cy="12" r="10" fill="none" stroke="#fff" stroke-width="3"/></svg></button>
  <button aria-label="Task view"><svg width="30" height="22" viewBox="0 0 30 22" fill="none" stroke="#fff" stroke-width="2"><path d="M7 2h16v18H7zM5 4H1v14h4M25 4h4v14h-4"/></svg></button>
  <button aria-label="Store"><svg width="22" height="24" viewBox="0 0 22 24"><path d="M0 6h22l-2 17-18 1z" fill="#fff"/><path d="M6 8V4q0-3 5-3t5 3v4" fill="none" stroke="#fff" stroke-width="2"/><path d="M5 11l5-1v5H5zM11 10l6-1v6h-6zM5 16h5v5l-5-1zM11 16h6v6l-6-1z" fill="#000"/></svg></button>
  <button aria-label="Eclipse"><svg width="24" height="22" viewBox="0 0 24 22"><circle cx="11" cy="11" r="11" fill="#f7941e"/><circle cx="13" cy="11" r="11" fill="#2c2255"/><path d="M4 8h19M3 11h21M4 14h19" stroke="#ddd" stroke-width="2"/></svg></button>
  <button class="running" aria-label="Sublime Text"><svg width="24" height="22" viewBox="0 0 24 22"><rect width="24" height="22" rx="3" fill="#777"/><rect x="2" y="1" width="20" height="17" rx="2" fill="#444"/><path d="M16 5q-8-2-8 1 0 2 4 3t4 3q0 3-8 2" fill="none" stroke="#ff9a2b" stroke-width="2"/></svg></button>
  <button aria-label="Mail"><svg width="24" height="20" viewBox="0 0 24 20"><path d="M0 8l12-8 12 8v12H0z" fill="#fff"/><path d="M2 6h20l-9 10v-4z" fill="#000"/></svg></button>
  <button class="running current" aria-label="Chrome"><svg width="22" height="22" viewBox="0 0 22 22"><circle cx="11" cy="11" r="11" fill="#fbc116"/><path d="M11 11L1.500 5.500A11 11 0 0 1 20.500 5.500H11z" fill="#dd4b3e"/><path d="M1.500 5.500A11 11 0 0 0 10 22l5-8H6z" fill="#1da462"/><circle cx="11" cy="11" r="5" fill="#4688f1" stroke="#fff" stroke-width="1"/></svg></button>
  <button aria-label="MySQL Workbench"><svg width="24" height="24" viewBox="0 0 24 24"><rect width="24" height="24" rx="3" fill="#1e5480"/><path d="M4 22Q3 10 5 4q4-1 8 6t8 12M8 10q-1 4 3 7M15 3l4 1 2 4" fill="none" stroke="#cde"/></svg></button>
  <button class="running stacked" aria-label="File Explorer"><svg width="24" height="20" viewBox="0 0 24 20"><path d="M1 0h9l2 3h11v16H1z" fill="#ffe08a"/><path d="M1 0h9v4H1z" fill="#f4bc3a"/><path d="M5 20V9h14v11h-4v-6H9v6z" fill="#2ba3e8"/></svg></button>
  <button class="running" aria-label="Edge"><svg width="22" height="22" viewBox="0 0 22 22"><path d="M1 10C2-3 21-4 21 9v4H8q1 7 12 3v4Q5 26 4 14q1-5 6-6-3 1-3 3h8Q15 4 10 5 4 5 1 10z" fill="#0078d7"/></svg></button>
  <button aria-label="Notepad"><svg width="24" height="24" viewBox="0 0 24 24"><path d="M8 1l13 2-5 20-15-3z" fill="#7fc2cf"/><path d="M8 1l13 2-1 3L7 4z" fill="#eee"/><path d="M21 3l2 2-5 19-2-1z" fill="#ccc"/></svg></button>
  <button class="running" aria-label="Command Prompt"><svg width="24" height="20" viewBox="0 0 24 20"><path d="M1 1h22v18H1z" fill="#000" stroke="#aaa"/><path d="M1 1h22v4H1z" fill="#ddd"/><path d="M4 9h3M8 7v4M10 9l2 2M13 11h3" stroke="#ddd"/></svg></button>
  <button class="running stacked" aria-label="Git"><svg width="24" height="24" viewBox="0 0 24 24"><path d="M12 0l5 5-5 6-5-6z" fill="#f07070"/><path d="M6 6l5 6-5 6-6-6z" fill="#75a7f5"/><path d="M18 6l6 6-6 6-5-6z" fill="#6fbf4a"/><path d="M12 13l5 6-5 5-5-5z" fill="#ffe072"/><path d="M9 3l6 9-3 6" stroke="#222" stroke-width="2" fill="none"/></svg></button>
  <button aria-label="Word"><svg width="24" height="24" viewBox="0 0 24 24"><path d="M12 3h12v18H12z" fill="#fff" stroke="#2b579a"/><path d="M15 7h7M15 10h7M15 13h7M15 16h7" stroke="#2b579a"/><path d="M0 3l14-3v24L0 21z" fill="#2b579a"/><path d="M3 8l2 8 2-7 2 7 2-8" fill="none" stroke="#fff" stroke-width="2"/></svg></button>
  <div class="tray">
    <svg width="18" height="10" viewBox="0 0 18 10"><path d="M1 9l8-8 8 8" fill="none" stroke="#fff" stroke-width="2"/></svg>
    <svg width="24" height="16" viewBox="0 0 24 16"><path d="M7 4h15v11H5V9" fill="none" stroke="#fff"/><path d="M8 6h12v7H7zM23 7h1v4h-1z" fill="#fff"/><path d="M2 0v3M6 0v3M0 3h8v4q-4 3-8 0zM4 8v6" fill="none" stroke="#fff"/></svg>
    <svg width="20" height="20" viewBox="0 0 20 20" fill="none" stroke="#bbb" stroke-width="2"><path d="M1 19Q1 3 18 1M6 19Q6 7 18 6M11 19q0-7 7-8"/><circle cx="17" cy="17" r="2" fill="#fff" stroke="none"/></svg>
    <time>1:04 PM</time>
    <svg class="notice" width="24" height="24" viewBox="0 0 24 24"><path d="M0 0h24v19H15l-4 5v-5H0z" fill="#fff"/><path d="M5 5h14M5 9h14M5 13h9" stroke="#000" stroke-width="2"/></svg>
  </div>
</footer>
</body>
</html>
```
FILE: styles.css
```css
* { box-sizing: border-box; }
html, body { margin: 0; height: 100%; }
body { display: flex; flex-direction: column; overflow: hidden; font-family: "Liberation Sans", Arial, sans-serif; color: #333; background: #fff; }
button { border: 0; padding: 0; background: none; font: inherit; color: inherit; }
a { color: inherit; text-decoration: none; }
svg { flex: none; }
.defs { position: absolute; width: 0; height: 0; }

.browser { flex: none; background: #fafafa; border-bottom: 1px solid #b0b0b0; font-family: "Open Sans", "Noto Sans", sans-serif; font-size: 17px; color: #222; }
.tabstrip { display: flex; justify-content: space-between; height: 44px; background: #f3705c; }
.tabs { display: flex; padding: 1px 0 0 9px; }
.tab { position: relative; display: flex; align-items: center; width: 215px; margin-right: -19px; padding: 0 26px 6px 24px; background: #b9655a; clip-path: polygon(0 100%, 18px 0, calc(100% - 18px) 0, 100% 100%); }
.tab::before { content: ""; position: absolute; inset: 1px; background: #f9b5aa; clip-path: polygon(0 100%, 18px 0, calc(100% - 18px) 0, 100% 100%); }
.tab > * { position: relative; }
.tab.active { background: #fafafa; z-index: 1; }
.tab.active::before { background: #fafafa; }
.favicon { width: 24px; height: 24px; fill: #1b1817; }
.pace-text { font-family: "Liberation Serif", serif; font-size: 11px; font-style: italic; font-weight: 700; }
.tab-title { flex: 1; margin-left: 9px; overflow: hidden; white-space: nowrap; line-height: 24px; -webkit-mask-image: linear-gradient(90deg, #000 75%, transparent); mask-image: linear-gradient(90deg, #000 75%, transparent); }
.tab-close { display: flex; margin-left: 12px; }
.tab-close svg { width: 12px; height: 12px; }
.new-tab { align-self: center; width: 42px; height: 24px; margin: 0 0 0 20px; background: #f9b5aa; border: 1px solid #c4685c; border-radius: 3px; transform: skewX(18deg); }
.window-buttons { display: flex; align-items: flex-start; gap: 10px; padding-right: 6px; }
.profile { width: 95px; height: 26px; background: #e2604f; border: 1px solid #b74c3e; border-top: 0; border-radius: 0 0 5px 5px; color: #fff; font-size: 16px; text-shadow: 0 0 3px #222, 0 1px 2px #222; }
.window-controls { display: flex; height: 26px; background: #fdb878; border: 1px solid #b9714a; border-top: 0; border-radius: 0 0 5px 5px; }
.window-controls button { display: grid; place-items: center; width: 37px; border-right: 1px solid #b9714a; }
.window-controls .wide { width: 63px; border: 0; }

.toolbar { display: flex; align-items: center; padding: 6px 15px 0 6px; }
.tool { display: grid; place-items: center; width: 42px; height: 42px; }
.omnibox { display: flex; flex: 1; align-items: center; height: 42px; margin-left: 7px; padding: 0 10px 0 16px; background: #fff; border: 1px solid #aaa; border-radius: 3px; font-size: 20px; }
.secure { margin: 0 12px 0 10px; padding-right: 14px; border-right: 1px solid #bbb; color: #0b8043; }
.url { flex: 1; }
.url b { font-weight: 400; color: #0b8043; }
.url i { font-style: normal; color: #888; }
.omnibox svg + svg { margin-left: 12px; }
.extensions { display: flex; align-items: center; gap: 24px; margin-left: 16px; }

.bookmarks { display: flex; align-items: center; gap: 21px; height: 42px; padding: 0 22px 2px 17px; white-space: nowrap; }
.bookmarks a { display: flex; align-items: center; gap: 10px; }
.bookmarks .tight { gap: 7px; }
.bookmarks .apps { width: 20px; height: 20px; }
.bookmarks .youtube { width: 24px; height: 18px; }
.bookmarks .folder { width: 19px; height: 22px; }
.bookmarks .other { margin-left: auto; padding-left: 17px; border-left: 1px solid #ccc; }

.viewport { display: flex; flex: 1; min-height: 0; }
.page { display: flex; flex: 1; flex-direction: column; min-width: 0; }
.site-nav { display: flex; flex: none; align-items: flex-start; height: 48px; background: #3572a0; color: #fff; font-size: 14px; }
.site-nav.bottom { height: 47px; }
.site-nav > a { padding: 0 16px; line-height: 48px; }
.spacer { flex: 1; }
.social { display: flex; height: 42px; padding: 0 1px; background: #1b384f; }
.social a { display: grid; place-items: center; width: 42px; }
.social svg { width: 13px; height: 13px; fill: #fff; }
.banner { flex: none; margin: 1px 66px 0; background: #0d9c5c; color: #f0f8f4; font-size: 28px; line-height: 110px; text-align: center; }
.content { display: grid; flex: 1; grid-template-columns: 2fr 1fr; min-height: 0; margin: 0 51px; }
.map { position: relative; margin: 0 15px; min-height: 0; overflow: hidden; }
.map-canvas { display: block; width: 100%; height: 100%; font-family: Roboto, sans-serif; }
.details { padding-top: 20px; text-align: center; }
.details hr { margin: 0; border: 0; border-top: 1px solid #eee; }
.details h2 { margin: 0; padding: 20px 0; font-size: 24px; font-weight: 400; line-height: 26px; }
.hand { width: 70px; height: 60px; margin-top: 25px; }

.rail path { fill: none; stroke: #d2d2d2; stroke-width: 5; }
.streets path { fill: none; stroke: #fff; stroke-width: 9; }
.piers path { fill: none; stroke: #e9e9e9; stroke-dasharray: 10 18; }
.case { fill: none; stroke: #e6a862; stroke-width: 20; stroke-linejoin: round; }
.fill { fill: none; stroke: #ffd494; stroke-width: 13; stroke-linejoin: round; }
.case.yellow { stroke: #eccb79; stroke-width: 18; }
.fill.yellow { stroke: #ffe9a6; stroke-width: 13; }
.tunnel { fill: none; stroke: #ddd3c8; stroke-width: 11; }
.border { fill: none; stroke: #8b9aab; stroke-width: 3; stroke-dasharray: 22 10; }
.map-canvas text { paint-order: stroke; stroke: #fff; stroke-width: 2px; stroke-linejoin: round; }
.street text { font-size: 11px; fill: #777; }
.map-canvas .highway-name text { font-size: 12px; fill: #7b4512; stroke: #ffd494; }
.map-canvas .water-name text { font-style: italic; fill: #5a8fd0; stroke: none; font-size: 12px; }
.map-canvas .state text { font-size: 11px; fill: #8b8378; }
.town text { font-size: 13px; fill: #5b4c2b; }
.town .city { font-size: 17px; font-weight: 500; letter-spacing: 1px; }
.town .metro { font-size: 21px; font-weight: 500; letter-spacing: 2px; }
.district text { font-size: 12px; fill: #93784f; text-anchor: middle; }
.park text { font-size: 13px; font-style: italic; fill: #3f8827; text-anchor: middle; }
.park .upright text { font-style: normal; }
.poi text { font-size: 13px; fill: #333; text-anchor: end; }
.poi .eat text { fill: #813b2e; }
.poi text.s { text-anchor: start; }
.map-canvas .shields text { font-size: 9px; font-weight: 700; fill: #fff; stroke: none; text-anchor: middle; }
.plates rect { fill: #fff; stroke: #555; }
.map-canvas .plates text { font-size: 9px; fill: #333; stroke: none; text-anchor: middle; }
.map-canvas .plates .tiny { font-size: 7px; }
.map-canvas .callout text { font-family: "Liberation Sans", Arial, sans-serif; font-size: 16px; font-weight: 700; fill: #fff; stroke: none; text-anchor: start; }
.map-canvas .callout .dollar { text-anchor: middle; fill: #9fe; stroke: #000; }

.map-type { position: absolute; top: 10px; left: 10px; display: flex; height: 31px; background: #fff; border-radius: 2px; box-shadow: 0 1px 3px #0004; font-family: Roboto, sans-serif; font-size: 11px; color: #565656; }
.map-type button { padding: 0 8px; }
.map-type .selected { border-right: 1px solid #e6e6e6; font-weight: 500; color: #000; }
.map-tools { position: absolute; right: 10px; bottom: -22px; display: grid; gap: 10px; }
.map-tools > * { width: 28px; background: #fff; border-radius: 2px; box-shadow: 0 1px 3px #0004; }
.pegman { display: grid; place-items: center; height: 28px; }
.zoom { display: grid; justify-items: center; padding: 0 5px; }
.zoom button { display: grid; place-items: center; width: 18px; height: 27px; }
.zoom button + button { height: 47px; padding-bottom: 18px; border-top: 1px solid #e0e0e0; }

.scrollbar { display: flex; flex: none; flex-direction: column; align-items: center; gap: 43px; width: 25px; padding: 11px 0 10px; background: #f1f1f1; }
.thumb { flex: 1; width: 21px; margin-bottom: -14px; background: #c1c1c1; }

.taskbar { display: flex; flex: none; height: 46px; background: #020409; color: #fff; }
.taskbar button { position: relative; display: grid; place-items: center; width: 57px; }
.taskbar button.system { width: 54px; }
.running::after { content: ""; position: absolute; right: 7px; bottom: 0; left: 7px; height: 3px; background: #76b9ed; }
.stacked::after { background: linear-gradient(90deg, #76b9ed 70%, #4f83ab 70%); }
.taskbar .current { background: #333439; }
.current::after { right: 0; left: 0; }
.tray { display: flex; align-items: center; gap: 19px; margin-left: auto; margin-right: 6px; padding-right: 32px; border-right: 1px solid #555; font-family: "Open Sans", sans-serif; font-size: 17px; }
.notice { margin-left: 14px; }
```
